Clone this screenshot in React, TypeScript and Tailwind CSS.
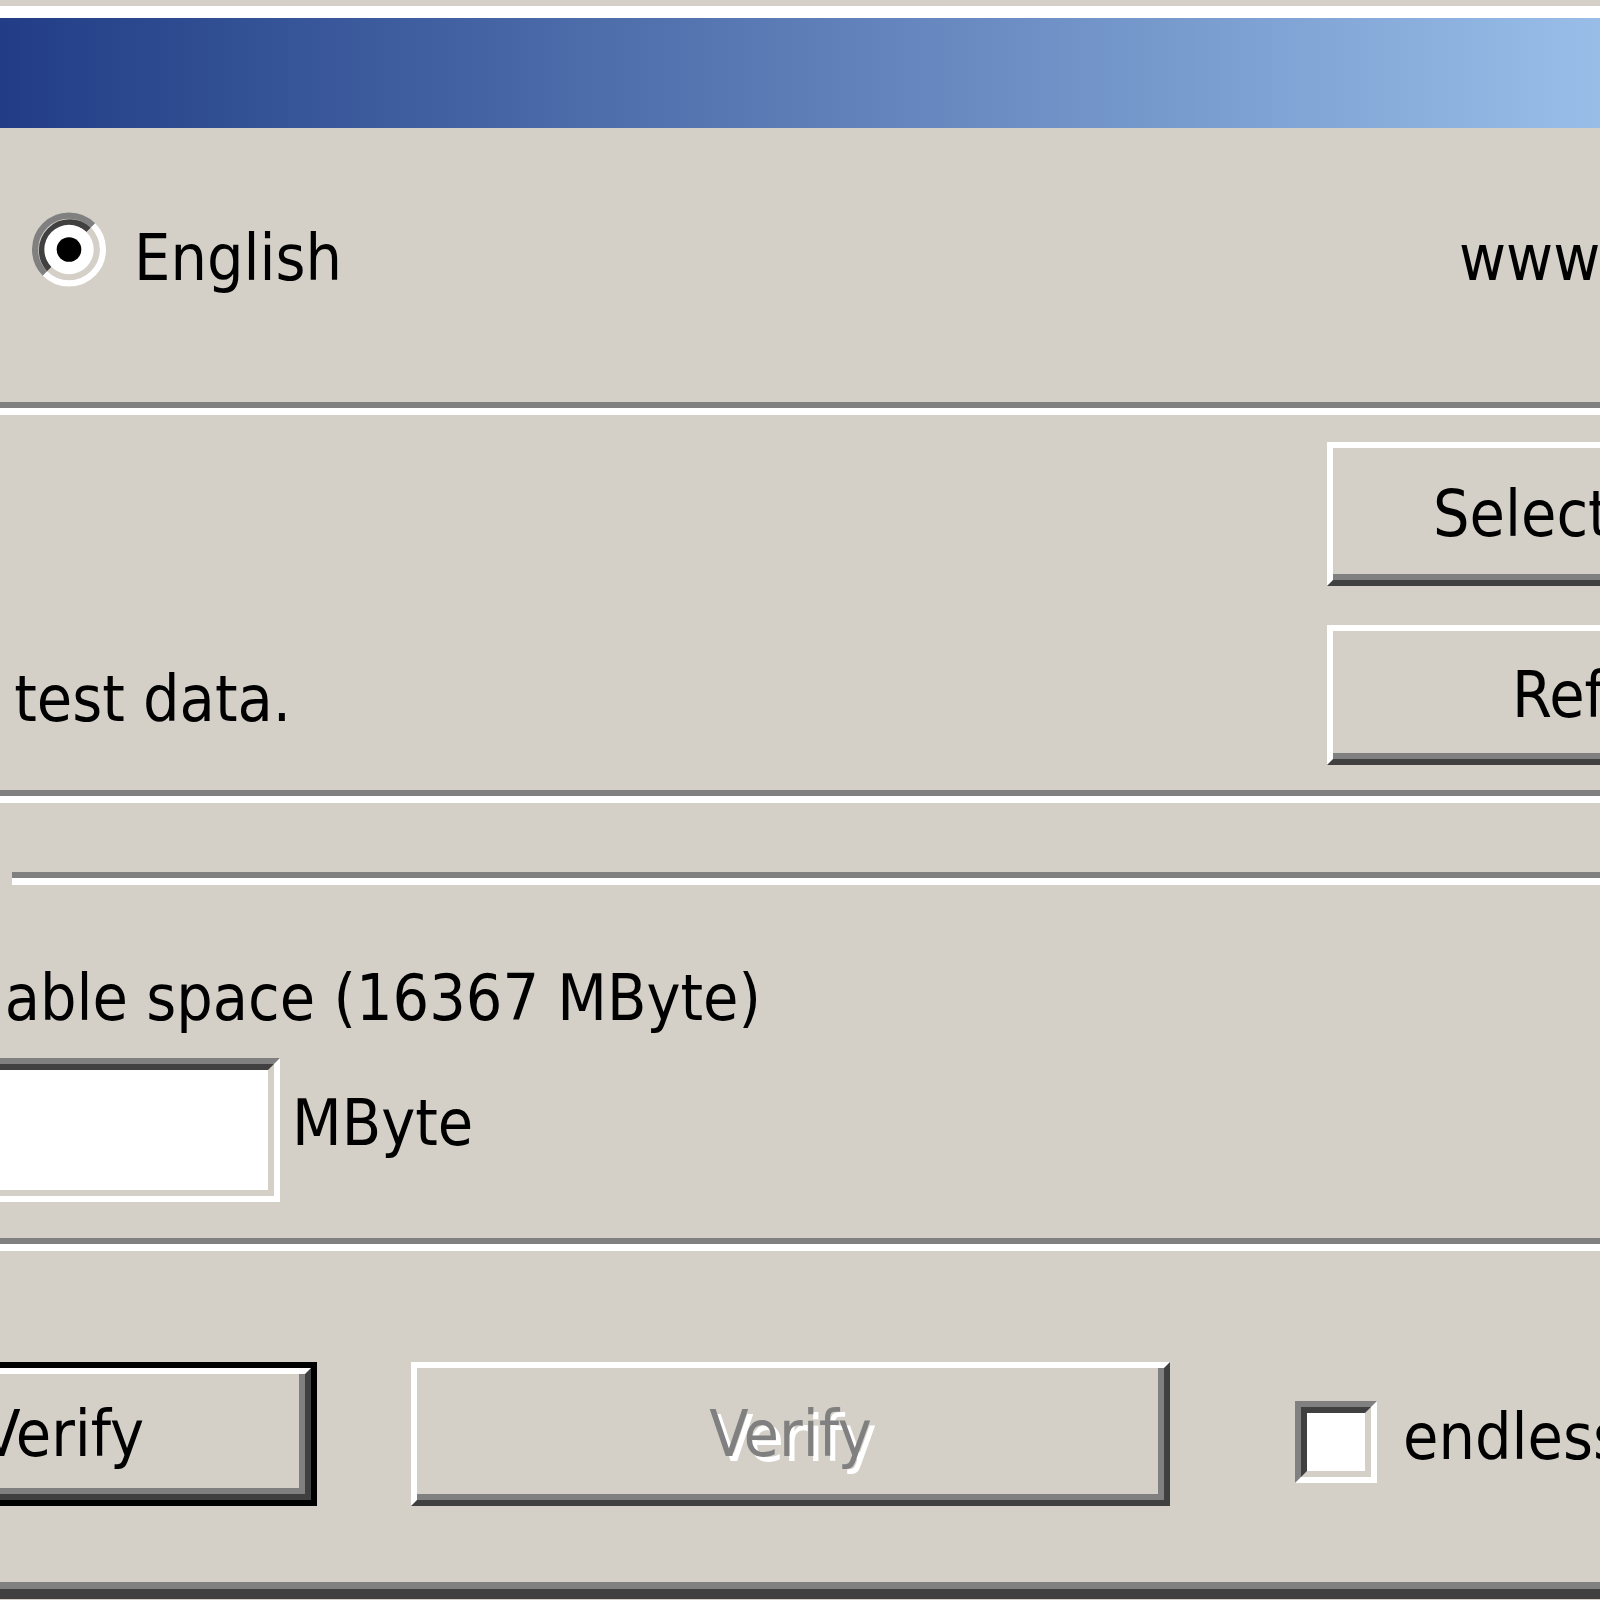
const face = "font-[family-name:'DejaVu_Sans_Condensed','DejaVu_Sans',sans-serif]"

function Etched({ className = '' }: { className?: string }) {
  return (
    <div className={`shrink-0 ${className}`}>
      <div className="h-[6px] bg-[#808080]" />
      <div className="h-[7px] bg-white" />
    </div>
  )
}

function RadioOn() {
  return (
    <svg viewBox="0 0 12 12" className="h-[75px] w-[74px] shrink-0">
      <path d="M2.11 9.89 A5.5 5.5 0 0 1 9.89 2.11" fill="none" stroke="#808080" strokeWidth="1" />
      <path d="M9.89 2.11 A5.5 5.5 0 0 1 2.11 9.89" fill="none" stroke="#ffffff" strokeWidth="1" />
      <path d="M2.82 9.18 A4.5 4.5 0 0 1 9.18 2.82" fill="none" stroke="#404040" strokeWidth="1" />
      <path d="M9.18 2.82 A4.5 4.5 0 0 1 2.82 9.18" fill="none" stroke="#d4d0c8" strokeWidth="1" />
      <circle cx="6" cy="6" r="4" fill="#ffffff" />
      <circle cx="6" cy="6" r="2" fill="#000000" />
    </svg>
  )
}

function Button({
  children,
  className = '',
  inner = '',
}: {
  children: React.ReactNode
  className?: string
  inner?: string
}) {
  return (
    <div
      className={`flex shrink-0 border-[6px] border-t-white border-l-white border-r-[#404040] border-b-[#404040] bg-[#d4d0c8] shadow-[inset_-6px_-6px_0_#808080] ${className}`}
    >
      <div className={`flex min-w-0 flex-1 items-center whitespace-nowrap ${inner}`}>{children}</div>
    </div>
  )
}

export default function App() {
  return (
    <div className={`flex h-[1600px] w-[1600px] flex-col overflow-hidden bg-[#d4d0c8] text-[64px] leading-none text-black ${face}`}>
      {/* window frame + caption */}
      <div className="h-[6px] shrink-0" />
      <div className="h-[12px] shrink-0 bg-white" />
      <div className="h-[110px] shrink-0 bg-linear-to-r from-[#223d86] via-[#5d7db7] to-[#98bee8]" />

      {/* language */}
      <div className="mt-[84px] flex h-[75px] shrink-0 items-start">
        <div className="flex w-[1459px] shrink-0 items-start">
          <div className="ml-[32px]">
            <RadioOn />
          </div>
          <span className="ml-[28px] mt-[14px]">English</span>
        </div>
        <span className="mt-[14px] whitespace-nowrap">www.heise.de/ct</span>
      </div>

      <Etched className="mt-[115px]" />

      {/* target */}
      <div className="flex h-[375px] shrink-0">
        <div className="flex w-[1327px] shrink-0 items-start">
          <div className="flex w-[291px] shrink-0 justify-end whitespace-nowrap">
            <span className="mt-[252px]">test data.</span>
          </div>
        </div>
        <div className="flex w-[273px] shrink-0 flex-col">
          <Button className="mt-[27px] h-[144px] w-[620px]" inner="pl-[100px]">
            Select target
          </Button>
          <Button className="mt-[39px] h-[140px] w-[620px]" inner="pl-[179px]">
            Refresh
          </Button>
        </div>
      </div>

      <Etched />

      {/* data volume */}
      <Etched className="ml-[12px] mt-[69px]" />

      <div className="mt-[81px] flex w-[761px] shrink-0 justify-end whitespace-nowrap">
        <span>all available space (16367 MByte)</span>
      </div>

      <div className="mt-[28px] flex h-[144px] shrink-0 items-start">
        <div className="flex h-[144px] w-[280px] shrink-0 border-t-[6px] border-r-[6px] border-b-[6px] border-t-[#808080] border-r-white border-b-white">
          <div className="flex-1 border-t-[6px] border-r-[6px] border-b-[6px] border-t-[#404040] border-r-[#d4d0c8] border-b-[#d4d0c8] bg-white" />
        </div>
        <span className="ml-[12px] mt-[33px]">MByte</span>
      </div>

      <Etched className="mt-[36px]" />

      {/* actions */}
      <div className="mt-[111px] flex h-[144px] shrink-0 items-start">
        <div className="ml-[-383px] flex h-[144px] w-[700px] shrink-0 border-[6px] border-black">
          <Button className="h-full w-full" inner="justify-end pr-[161px]">
            Write + Verify
          </Button>
        </div>
        <Button
          className="ml-[94px] h-[144px] w-[759px]"
          inner="justify-center text-[#808080] [text-shadow:5px_5px_0_#ffffff]"
        >
          Verify
        </Button>
        <div className="ml-[125px] mt-[39px] flex h-[82px] w-[82px] shrink-0 border-[6px] border-t-[#808080] border-l-[#808080] border-r-white border-b-white">
          <div className="flex-1 border-[6px] border-t-[#404040] border-l-[#404040] border-r-[#d4d0c8] border-b-[#d4d0c8] bg-white" />
        </div>
        <span className="ml-[26px] mt-[43px] whitespace-nowrap">endless verify</span>
      </div>

      <div className="mt-[76px] h-[7px] shrink-0 bg-[#808080]" />
      <div className="h-[10px] shrink-0 bg-[#404040]" />
    </div>
  )
}
